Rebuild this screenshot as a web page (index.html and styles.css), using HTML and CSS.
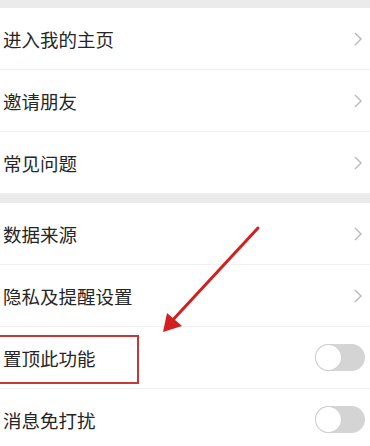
FILE: index.html
```html
<!DOCTYPE html>
<html lang="zh-CN">
<head>
    <meta charset="UTF-8">
    <meta name="viewport" content="width=device-width, initial-scale=1.0">
    <title>设置</title>
    <link rel="stylesheet" href="styles.css">
</head>
<body>
    <div class="page">
        <div class="group">
            <div class="row"><span class="label">进入我的主页</span><svg class="chev" viewBox="0 0 8 14"><path d="M1 1L7 7L1 13"/></svg></div>
            <div class="row"><span class="label">邀请朋友</span><svg class="chev" viewBox="0 0 8 14"><path d="M1 1L7 7L1 13"/></svg></div>
            <div class="row last"><span class="label">常见问题</span><svg class="chev" viewBox="0 0 8 14"><path d="M1 1L7 7L1 13"/></svg></div>
        </div>
        <div class="group">
            <div class="row"><span class="label">数据来源</span><svg class="chev" viewBox="0 0 8 14"><path d="M1 1L7 7L1 13"/></svg></div>
            <div class="row"><span class="label">隐私及提醒设置</span><svg class="chev" viewBox="0 0 8 14"><path d="M1 1L7 7L1 13"/></svg></div>
            <div class="row"><span class="label">置顶此功能</span><span class="switch"></span></div>
            <div class="row last"><span class="label">消息免打扰</span><span class="switch"></span></div>
        </div>

        <!-- annotation drawn over the screenshot -->
        <div class="mark-box"></div>
        <svg class="mark-arrow" width="370" height="446" viewBox="0 0 370 446">
            <line x1="258" y1="228" x2="170" y2="323" stroke="#d21f1f" stroke-width="3" stroke-linecap="round"/>
            <polygon points="163,332 167,313 182,326" fill="#d21f1f"/>
        </svg>
    </div>
</body>
</html>
```

FILE: styles.css
```css
*{
    box-sizing: border-box;
}
body{
    margin: 0;
    padding: 0;
    background-color: #ebebeb;
    font-family: "Noto Sans CJK SC", "Noto Sans", sans-serif;
}
.page{
    position: relative;
    width: 370px;
    height: 446px;
    overflow: hidden;
    padding-top: 8px;
}
.group{
    background-color: #fff;
    margin-bottom: 10px;
}
.row{
    display: flex;
    align-items: center;
    justify-content: space-between;
    height: 62px;
    padding: 0 8px 0 3px;
    border-bottom: 1px solid #f0f0f0;
}
.row.last{
    border-bottom: none;
    height: 61px;
}
.label{
    font-size: 18.5px;
    color: #262626;
}
.chev{
    width: 8px;
    height: 14px;
    fill: none;
    stroke: #b8b8b8;
    stroke-width: 1.4;
}
.switch{
    position: relative;
    width: 50px;
    height: 27px;
    border-radius: 14px;
    background-color: #d4d4d4;
    margin-right: -3px;
}
.switch::after{
    content: "";
    position: absolute;
    left: 1px;
    top: 1px;
    width: 25px;
    height: 25px;
    border-radius: 50%;
    background-color: #fff;
    box-shadow: 0 0 0 1px #d0d0d0;
}
.mark-box{
    position: absolute;
    left: -4px;
    top: 335px;
    width: 143px;
    height: 49px;
    border: 2px solid #c83838;
}
.mark-arrow{
    position: absolute;
    left: 0;
    top: 0;
}
```
